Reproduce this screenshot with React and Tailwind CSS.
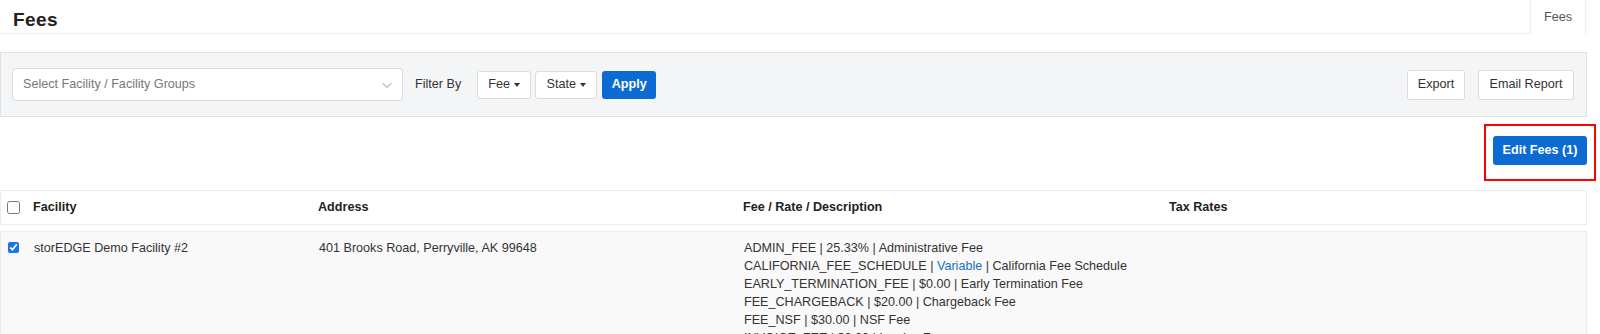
import React from 'react'

const FEES = [
  { code: 'ADMIN_FEE', rate: '25.33%', desc: 'Administrative Fee' },
  { code: 'CALIFORNIA_FEE_SCHEDULE', rate: 'Variable', desc: 'California Fee Schedule', link: true },
  { code: 'EARLY_TERMINATION_FEE', rate: '$0.00', desc: 'Early Termination Fee' },
  { code: 'FEE_CHARGEBACK', rate: '$20.00', desc: 'Chargeback Fee' },
  { code: 'FEE_NSF', rate: '$30.00', desc: 'NSF Fee' },
  { code: 'INVOICE_FEE', rate: '$0.00', desc: 'Invoice Fee' },
]

function Caret() {
  return <span className="ml-[4px] inline-block w-0 h-0 border-x-[3px] border-x-transparent border-t-[4px] border-t-[#333] align-middle" />
}

export default function App() {
  return (
    <div className="w-[1600px] h-[334px] overflow-hidden bg-white text-[12.6px] text-[#333] font-['Liberation_Sans',Arial,sans-serif]">
      {/* Title bar */}
      <div className="flex h-[34px] mr-[14px]">
        <div className="flex-1 flex items-center pl-[13px] pt-[8px] border-b border-[#f0f0f0]">
          <h1 className="text-[19px] font-bold text-[#222] tracking-[0.4px]">Fees</h1>
        </div>
        <div className="w-[56px] flex items-center justify-center border-x border-[#eee] text-[#555]">Fees</div>
      </div>

      {/* Filter panel */}
      <div className="mt-[18px] mr-[13px] h-[65px] bg-[#f4f5f7] border border-[#dfe1e4] flex items-center pl-[11px] pr-[12px]">
        <div className="w-[391px] h-[33px] bg-white border border-[#dcdcdc] rounded-[4px] flex items-center justify-between pl-[10px] pr-[8px] text-[#777]">
          <span>Select Facility / Facility Groups</span>
          <svg width="14" height="14" viewBox="0 0 14 14" fill="none" stroke="#c4c4c4" strokeWidth="1.3">
            <path d="M2.5 5l4.5 4.5L11.5 5" />
          </svg>
        </div>
        <span className="ml-[12px] text-[#333]">Filter By</span>
        <button className="ml-[16px] w-[54px] h-[28px] bg-white border border-[#dcdcdc] rounded-[3px] flex items-center justify-center">
          Fee<Caret />
        </button>
        <button className="ml-[4px] w-[62px] h-[28px] bg-white border border-[#dcdcdc] rounded-[3px] flex items-center justify-center">
          State<Caret />
        </button>
        <button className="ml-[5px] w-[54px] h-[28px] bg-[#0b6bd3] text-white rounded-[3px] font-semibold">Apply</button>
        <div className="flex-1" />
        <button className="w-[58px] h-[30px] bg-white border border-[#dcdcdc] rounded-[3px]">Export</button>
        <button className="ml-[13px] w-[96px] h-[30px] bg-white border border-[#dcdcdc] rounded-[3px]">Email Report</button>
      </div>

      {/* Edit row */}
      <div className="mt-[7px] flex justify-end mr-[4px]">
        <div className="border-2 border-[#f00] pt-[10px] pb-[14px] px-[7px]">
          <button className="w-[94px] h-[29px] bg-[#0b6bd3] text-white rounded-[3px] font-semibold">Edit Fees (1)</button>
        </div>
      </div>

      {/* Table header */}
      <div className="mt-[9px] mr-[13px] h-[35px] border border-[#ececec] flex items-center font-bold text-[#222]">
        <input type="checkbox" readOnly className="ml-[6px] w-[13px] h-[13px]" />
        <span className="ml-[13px] w-[285px]">Facility</span>
        <span className="w-[425px]">Address</span>
        <span className="w-[426px]">Fee / Rate / Description</span>
        <span>Tax Rates</span>
      </div>

      {/* Body row */}
      <div className="mt-[6px] mr-[13px] h-[120px] bg-[#f9f9f9] border border-[#ececec] flex items-start pt-[7px] leading-[18px]">
        <input type="checkbox" readOnly checked className="ml-[7px] mt-[3px] w-[11px] h-[11px] accent-[#1a73e8]" />
        <span className="ml-[15px] w-[285px]">storEDGE Demo Facility #2</span>
        <span className="w-[425px]">401 Brooks Road, Perryville, AK 99648</span>
        <div className="w-[426px]">
          {FEES.map((f) => (
            <div key={f.code}>
              {f.code} | {f.link ? <span className="text-[#1a6fc4]">{f.rate}</span> : f.rate} | {f.desc}
            </div>
          ))}
        </div>
      </div>
    </div>
  )
}
